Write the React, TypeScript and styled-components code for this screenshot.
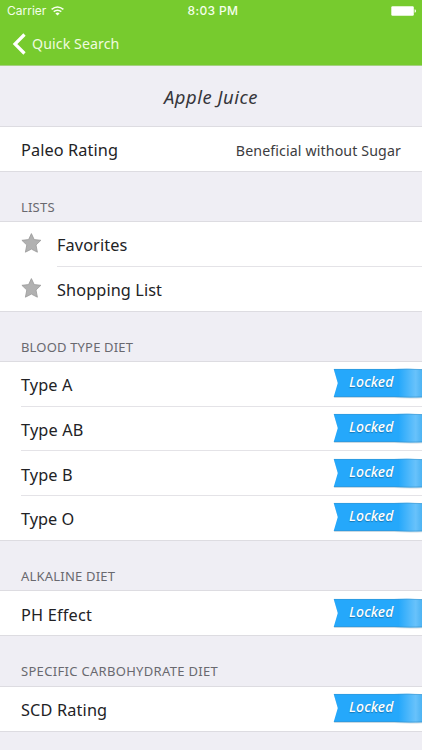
import React from "react";
import styled, { createGlobalStyle } from "styled-components";

const Global = createGlobalStyle`
  *{box-sizing:border-box}
  body{margin:0;background:#efeef4;font-family:"Noto Sans",sans-serif;color:#222225;overflow:hidden}
`;
const Screen = styled.main`
  width: 422px;
  height: 750px;
  overflow: hidden;
  background: #efeef4;
`;
const Header = styled.header`
  height: 66px;
  background: #77cb2e;
  border-bottom: 1px solid #a5d080;
  color: #f4ffe9;
`;
const StatusBar = styled.div`
  height: 22px;
  padding: 0 5px 0 7px;
  display: grid;
  grid-template-columns: 1fr auto 1fr;
  align-items: center;
  font-family: Inter, sans-serif;
  font-size: 12px;
  line-height: 22px;
`;
const Carrier = styled.div`
  display: flex;
  align-items: center;
  gap: 5px;
`;
const Clock = styled.time`
  font-weight: 500;
  letter-spacing: 0.35px;
  padding-left: 2px;
`;
const Battery = styled.svg`
  justify-self: end;
`;
const NavBar = styled.nav`
  height: 43px;
  padding-left: 12px;
  display: flex;
  align-items: center;
  gap: 5px;
`;
const BackLabel = styled.span`
  font-size: 14.2px;
  line-height: 20px;
  letter-spacing: 0.08px;
  color: #eefbdf;
`;
const Title = styled.h1`
  margin: 0;
  height: 60px;
  font-size: 18.4px;
  font-weight: 400;
  font-style: italic;
  line-height: 62px;
  letter-spacing: 0.52px;
  text-align: center;
  color: #36363b;
`;
const Group = styled.section`
  background: #fff;
  border-top: 1px solid #dddce1;
  border-bottom: 1px solid #dddce1;
`;
const SectionHeading = styled.h2<{ $spacing: number }>`
  margin: 0;
  height: 49.2px;
  padding: 24.8px 21px 0;
  font-size: 13px;
  font-weight: 400;
  line-height: 20px;
  letter-spacing: ${(p) => p.$spacing}px;
  color: #69696f;
`;
const Row = styled.div<{ $inset: number; $divided: boolean }>`
  height: ${(p) => (p.$divided ? 44.7 : 44)}px;
  margin-left: ${(p) => p.$inset}px;
  border-bottom: ${(p) => (p.$divided ? "1px solid #e4e3e7" : "0")};
  display: flex;
  align-items: center;
  justify-content: space-between;
`;
const Label = styled.span<{ $spacing: number }>`
  font-size: 16.3px;
  line-height: 24px;
  padding-top: 2.6px;
  letter-spacing: ${(p) => p.$spacing}px;
`;
const StarSlot = styled.span`
  width: 36px;
  margin-left: -36px;
  flex: none;
  height: 24px;
`;
const Starred = styled.div`
  display: flex;
  align-items: center;
`;
const Value = styled.span`
  padding: 3px 21px 0 0;
  font-size: 14.2px;
  letter-spacing: 0.12px;
  line-height: 20px;
  color: #3c3c40;
`;
const RibbonBox = styled.div`
  position: relative;
  width: 90px;
  height: 34px;
  margin-top: 0.6px;
`;
const RibbonText = styled.span`
  position: absolute;
  left: 17px;
  top: 5px;
  font-size: 14px;
  font-weight: 500;
  font-style: italic;
  line-height: 20px;
  letter-spacing: 0.15px;
  color: #fff;
  text-shadow: 0 1px 1px #1677b5;
`;

function Ribbon() {
  return (
    <RibbonBox>
      <svg width="90" height="34" viewBox="0 0 90 34">
        <defs>
          <linearGradient id="ribbonBlue" gradientUnits="userSpaceOnUse" x1="0" x2="90" y1="0" y2="0">
            <stop stopColor="#25a8fb" />
            <stop offset=".74" stopColor="#25a8fb" />
            <stop offset=".93" stopColor="#68c2fb" />
            <stop offset="1" stopColor="#4cb3f3" />
          </linearGradient>
        </defs>
        <path d="M2 3H62Q78 2 90 3.2V31.2Q78 31.8 62 31H2L6 17Z" fill="#8ea9b8" opacity=".4" />
        <path d="M1.7 2H62Q78 1.4 90 2.2V30.2Q78 30.8 62 30H1.7L5.8 16Z" fill="url(#ribbonBlue)" />
        <path d="M2 2.4H62Q78 1.8 90 2.6M2 29.6H62Q78 30.4 90 29.8" fill="none" stroke="#3790c8" strokeWidth=".7" opacity=".75" />
      </svg>
      <RibbonText>Locked</RibbonText>
    </RibbonBox>
  );
}

function Star() {
  return (
    <StarSlot>
      <svg width="22" height="24" viewBox="0 0 22 24">
        <path
          d="M10.4 1.6 13.2 7.6 19.9 8.3 15 13 16.4 20.2 10.4 17.1 4.4 20.2 5.8 13 .9 8.3 7.6 7.6Z"
          fill="#b1b1b1"
          stroke="#999"
          strokeWidth=".8"
          strokeLinejoin="round"
        />
      </svg>
    </StarSlot>
  );
}

type Item = { label: string; spacing: number };

function LockedGroup({ items }: { items: Item[] }) {
  return (
    <Group>
      {items.map((item, i) => (
        <Row key={item.label} $inset={21} $divided={i < items.length - 1}>
          <Label $spacing={item.spacing}>{item.label}</Label>
          <Ribbon />
        </Row>
      ))}
    </Group>
  );
}

const bloodTypes: Item[] = [
  { label: "Type A", spacing: 0.1 },
  { label: "Type AB", spacing: 0.15 },
  { label: "Type B", spacing: 0.1 },
  { label: "Type O", spacing: 0 },
];

export default function App() {
  return (
    <>
      <Global />
      <Screen>
        <Header>
          <StatusBar>
            <Carrier>
              <span>Carrier</span>
              <svg width="13" height="10" viewBox="0 0 13 10" fill="none" stroke="#f7ffef" strokeWidth="1.6">
                <path d="M.6 3.4Q6.5-1.4 12.4 3.4M2.7 5.7Q6.5 2.7 10.3 5.7" />
                <path d="M4.4 7.4Q6.5 5.7 8.6 7.4L6.5 9.6Z" fill="#f7ffef" stroke="none" />
              </svg>
            </Carrier>
            <Clock>8:03 PM</Clock>
            <Battery width="26" height="10" viewBox="0 0 26 10">
              <rect x=".3" y=".2" width="22.5" height="9.6" rx="1.2" fill="#fff" />
              <path d="M23.6 3.3q1.4.2 1.4 1.7t-1.4 1.7Z" fill="#fff" />
            </Battery>
          </StatusBar>
          <NavBar>
            <svg width="15" height="22" viewBox="0 0 15 22">
              <path d="M12.5 1.5 3 11 12.5 20.5" fill="none" stroke="#fff" strokeWidth="3.2" />
            </svg>
            <BackLabel>Quick Search</BackLabel>
          </NavBar>
        </Header>
        <Title>Apple Juice</Title>
        <Group>
          <Row $inset={21} $divided={false}>
            <Label $spacing={0.1}>Paleo Rating</Label>
            <Value>Beneficial without Sugar</Value>
          </Row>
        </Group>
        <SectionHeading $spacing={0.2}>LISTS</SectionHeading>
        <Group>
          <Row $inset={57} $divided>
            <Starred>
              <Star />
              <Label $spacing={0.1}>Favorites</Label>
            </Starred>
          </Row>
          <Row $inset={57} $divided={false}>
            <Starred>
              <Star />
              <Label $spacing={0.1}>Shopping List</Label>
            </Starred>
          </Row>
        </Group>
        <SectionHeading $spacing={0.17}>BLOOD TYPE DIET</SectionHeading>
        <LockedGroup items={bloodTypes} />
        <SectionHeading $spacing={0.2}>ALKALINE DIET</SectionHeading>
        <LockedGroup items={[{ label: "PH Effect", spacing: 0.2 }]} />
        <SectionHeading $spacing={0.31}>SPECIFIC CARBOHYDRATE DIET</SectionHeading>
        <LockedGroup items={[{ label: "SCD Rating", spacing: 0.15 }]} />
      </Screen>
    </>
  );
}
